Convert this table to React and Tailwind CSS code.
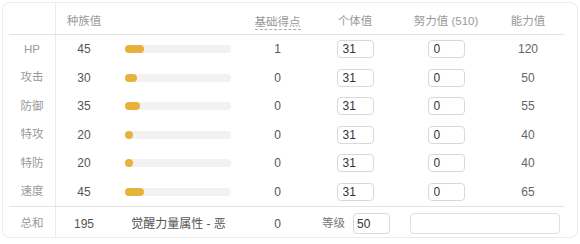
const stats = [
  { label: 'HP', base: 45, point: 1, iv: 31, ev: 0, value: 120 },
  { label: '攻击', base: 30, point: 0, iv: 31, ev: 0, value: 50 },
  { label: '防御', base: 35, point: 0, iv: 31, ev: 0, value: 55 },
  { label: '特攻', base: 20, point: 0, iv: 31, ev: 0, value: 40 },
  { label: '特防', base: 20, point: 0, iv: 31, ev: 0, value: 40 },
  { label: '速度', base: 45, point: 0, iv: 31, ev: 0, value: 65 },
];

const cols = 'grid w-[555px] grid-cols-[47px_56px_133px_65px_90px_92px_72px]';

function NumInput({ value, className = '' }) {
  return (
    <input
      readOnly
      value={value}
      className={`h-[18px] w-[37px] rounded-[4px] border border-[#d9d9d9] bg-white pl-[5px] text-[12px] text-[#333] outline-none ${className}`}
    />
  );
}

function StatBar({ base }) {
  const width = Math.max(8, Math.round((base / 255) * 106));
  return (
    <div className="ml-[13px] h-[8px] w-[106px] rounded-full bg-[#f2f2f2]">
      <div className="h-full rounded-full bg-[#e8b23a]" style={{ width }} />
    </div>
  );
}

export default function App() {
  return (
    <div className="h-[244px] w-[580px] bg-white pl-[2px] pt-[2px] font-['Liberation_Sans','Noto_Sans_CJK_SC',sans-serif]">
      <div className="h-[236px] w-[576px] rounded-lg border border-[#ececec] pl-[6px]">
        {/* header */}
        <div className={`${cols} h-[32px] border-b border-[#e3e3e3] text-[11.5px] text-[#999]`}>
          <div className="border-r border-[#ebebeb]" />
          <div className="flex items-end justify-center pb-[4px]">种族值</div>
          <div />
          <div className="flex items-end justify-center pb-[4px]">
            <span className="border-b border-dashed border-[#aaa] leading-[14px]">基础得点</span>
          </div>
          <div className="flex items-end justify-center pb-[4px]">个体值</div>
          <div className="flex items-end justify-center pb-[4px]">努力值 (510)</div>
          <div className="flex items-end justify-center pb-[4px]">能力值</div>
        </div>

        {/* stat rows */}
        {stats.map((s) => (
          <div key={s.label} className={`${cols} h-[28.5px] items-center text-[12px] text-[#555]`}>
            <div className="flex h-full items-center justify-center border-r border-[#ebebeb] text-[11.5px] text-[#999]">
              {s.label}
            </div>
            <div className="text-center">{s.base}</div>
            <div>
              <StatBar base={s.base} />
            </div>
            <div className="text-center">{s.point}</div>
            <div className="flex justify-center">
              <NumInput value={s.iv} />
            </div>
            <div className="flex justify-center">
              <NumInput value={s.ev} />
            </div>
            <div className="text-center text-[#666]">{s.value}</div>
          </div>
        ))}

        {/* totals */}
        <div className={`${cols} h-[32px] items-center border-t border-[#e3e3e3] text-[12px] text-[#555]`}>
          <div className="flex h-full items-center justify-center border-r border-[#ebebeb] pt-[2px] text-[11.5px] text-[#999]">
            总和
          </div>
          <div className="pt-[2px] text-center">195</div>
          <div className="pt-[2px] text-center">觉醒力量属性 - 恶</div>
          <div className="pt-[2px] text-center">0</div>
          <div className="flex items-center pl-[12px] pt-[2px]">
            <span className="mr-[8px] text-[11.5px] text-[#777]">等级</span>
            <input
              readOnly
              value="50"
              className="h-[21px] w-[37px] rounded-[4px] border border-[#d9d9d9] pl-[3px] text-[12px] text-[#333] outline-none"
            />
          </div>
          <div className="col-span-2 flex items-center pl-[10px] pt-[2px]">
            <div className="h-[21px] w-[150px] rounded-[4px] border border-[#e0e0e0]" />
          </div>
        </div>
      </div>
    </div>
  );
}
